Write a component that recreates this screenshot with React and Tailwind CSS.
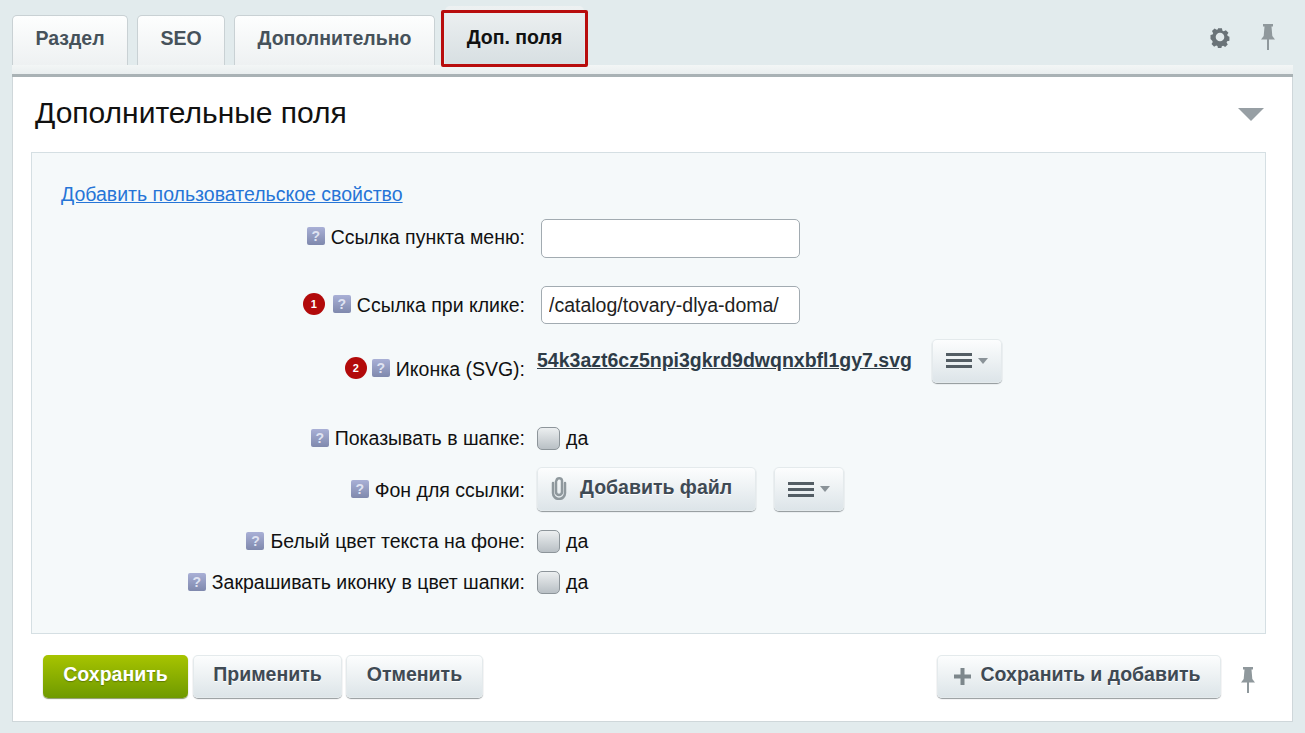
const btn =
  "flex items-center rounded-[5px] bg-linear-to-b from-[#fdfefe] to-[#dce4e8] shadow-[0_1px_1px_rgba(60,70,75,0.55)] inset-ring inset-ring-[#e4eaec] text-[19.5px] font-bold text-[#3f4a54] [text-shadow:0_1px_0_#fff]";

const rowBase = "grid grid-cols-[493px_1fr] items-center gap-x-3";

const Help = () => (
  <span className="mr-[6px] inline-flex h-[18px] w-[18px] shrink-0 -translate-y-[1px] items-center justify-center rounded-[2px] bg-linear-to-b from-[#a9b0d6] to-[#7f89ad] text-[14px] font-bold leading-none text-[#dfe3f2]">
    ?
  </span>
);

const Badge = ({ n, className = "mr-2" }) => (
  <span className={`inline-flex h-[22px] w-[22px] shrink-0 -translate-y-[1px] items-center justify-center rounded-full bg-[#b20a0a] text-[11px] font-bold leading-none text-white ${className}`}>
    {n}
  </span>
);

const Label = ({ children, badge, badgeClass, className = "" }) => (
  <div className={`flex items-center justify-end text-[19.5px] leading-[23px] text-[#111] ${className}`}>
    {badge && <Badge n={badge} className={badgeClass} />}
    <Help />
    <span>{children}</span>
  </div>
);

const Check = () => (
  <span className="flex items-center gap-[6px] text-[19.5px] leading-[23px] text-[#111]">
    <span className="h-[23px] w-[23px] rounded-[5px] border border-[#8d959a] bg-linear-to-b from-[#eceff0] to-[#b9c0c5]" />
    да
  </span>
);

const Pin = ({ className }) => (
  <svg className={className} width="16" height="26" viewBox="0 0 16 26" fill="currentColor">
    <path d="M3 0h10v2.500h-1.500l.8 9.500L15 15.500H1L3.700 12l.8-9.500H3z" />
    <rect x="7" y="15" width="2" height="11" />
  </svg>
);

const Gear = () => (
  <svg width="22" height="22" viewBox="0 0 22 22" fill="#6a7378">
    <path
      fillRule="evenodd"
      d="M8.700 1h4.600l.6 2.800 1.500.7 2.500-1.400 3 3-1.500 2.400.6 1.500 2 .7v4.600l-2.700.6-.6 1.500 1.400 2.400-3 3-2.400-1.500-1.500.6-.6 2.100H8.700l-.6-2.500-1.500-.6-2.400 1.400-3-3 1.400-2.400-.6-1.500L0 13.300V8.700l2.400-.6.7-1.500-1.400-2.500 3-3 2.500 1.500 1.500-.6z"
      transform="translate(1.500 1.500) scale(0.86)"
    />
    <circle cx="11" cy="11" r="4.300" fill="#e2eaec" />
  </svg>
);

const MenuBtn = () => (
  <button className={`${btn} h-[44px] w-[70px] justify-center gap-[6px]`}>
    <span className="flex w-[26px] flex-col gap-[3px]">
      <span className="h-[3px] bg-[#535d64]" />
      <span className="h-[3px] bg-[#535d64]" />
      <span className="h-[3px] bg-[#535d64]" />
    </span>
    <span className="h-0 w-0 border-x-[5px] border-t-[6px] border-x-transparent border-t-[#8a9298]" />
  </button>
);

const Clip = () => (
  <svg width="16" height="24" viewBox="0 0 16 24" fill="none" stroke="#8f989d" strokeWidth="2.500" strokeLinecap="round">
    <path d="M5 5.500V16a3 3 0 0 0 6 0V4.500a2.800 2.800 0 0 0-5.500 0" />
    <path d="M2 7v10a6 6 0 0 0 12 0V7" />
  </svg>
);

const tabs = [
  { name: "Раздел", w: "w-[116px]" },
  { name: "SEO", w: "w-[88px]" },
  { name: "Дополнительно", w: "w-[201px]" },
];

export default function App() {
  return (
    <div className="h-[733px] overflow-hidden bg-[#e2ebed] px-3 font-['Liberation_Sans',Arial,sans-serif]">
      <div className="flex h-[65px] items-end">
        <div className="flex gap-[9px]">
          {tabs.map((t) => (
            <div
              key={t.name}
              className={`${t.w} flex h-[50px] items-center justify-center rounded-t-[5px] border border-b-0 border-[#c9d1d4] bg-linear-to-b from-[#fdfefe] to-[#eef1f2] pb-[3px] text-[19.5px] font-bold text-[#46525b]`}
            >
              {t.name}
            </div>
          ))}
        </div>
        <div className="relative ml-[10px] flex h-[59px] w-[139px] items-center justify-center rounded-t-[5px] bg-linear-to-b from-[#eef1f2] to-[#d7dfe2] pt-[5px] text-[19.5px] font-bold text-[#111]">
          Доп. поля
          <span className="absolute -inset-x-[4px] bottom-[-2px] top-[4px] rounded-[2px] border-[3px] border-[#b80d0d]" />
        </div>
        <div className="ml-auto mr-[17px] flex items-center gap-[29px] pb-[15px]">
          <Gear />
          <Pin className="text-[#8f989c]" />
        </div>
      </div>

      <div className="h-[12px] border-b-[3px] border-[#a9b2b5] bg-linear-to-b from-[#f3f6f6] to-[#e9eeef]" />

      <div className="flex h-[645px] flex-col border-x border-b border-[#cfd7da] bg-white pl-[18px] pr-[26px]">
        <div className="flex h-[75px] items-center justify-between pr-[2px]">
          <h1 className="-mt-[4px] ml-[4px] text-[30px] font-normal text-[#111]">Дополнительные поля</h1>
          <span className="h-0 w-0 border-x-[13px] border-t-[13px] border-x-transparent border-t-[#979fa4]" />
        </div>

        <div className="flex h-[482px] flex-col border border-[#d5dfe3] bg-[#f5f9fa] pt-[30px]">
          <a className="ml-[29px] h-[23px] text-[19.5px] leading-[23px] text-[#2675d7] underline">Добавить пользовательское свойство</a>

          <div className={`${rowBase} mt-[13px] h-[39px]`}>
            <Label className="-mt-[3px]">Ссылка пункта меню:</Label>
            <input className="ml-1 h-[39px] w-[259px] rounded-[5px] border border-[#a2abb1] bg-white px-2 text-[19.5px]" />
          </div>

          <div className={`${rowBase} mt-[28px] h-[38px]`}>
            <Label badge="1">Ссылка при клике:</Label>
            <input
              readOnly
              value="/catalog/tovary-dlya-doma/"
              className="ml-1 h-[38px] w-[259px] rounded-[5px] border border-[#a2abb1] bg-white px-[7px] text-[19.5px] text-[#222]"
            />
          </div>

          <div className={`${rowBase} mt-[14px] h-[45px]`}>
            <Label badge="2" badgeClass="mr-[5px]" className="mt-[17px]">Иконка (SVG):</Label>
            <div className="flex items-center gap-5">
              <a className="text-[19.5px] font-bold text-[#2e3c47] underline">54k3azt6cz5npi3gkrd9dwqnxbfl1gy7.svg</a>
              <MenuBtn />
            </div>
          </div>

          <div className={`${rowBase} mt-[44px] h-[23px]`}>
            <Label>Показывать в шапке:</Label>
            <Check />
          </div>

          <div className={`${rowBase} mt-[17px] h-[44px]`}>
            <Label className="mt-[2px]">Фон для ссылки:</Label>
            <div className="flex gap-[18px]">
              <button className={`${btn} h-[44px] w-[219px] gap-[13px] pb-[3px] pl-[14px]`}>
                <Clip />
                Добавить файл
              </button>
              <MenuBtn />
            </div>
          </div>

          <div className={`${rowBase} mt-[19px] h-[23px]`}>
            <Label>Белый цвет текста на фоне:</Label>
            <Check />
          </div>

          <div className={`${rowBase} mt-[18px] h-[23px]`}>
            <Label>Закрашивать иконку в цвет шапки:</Label>
            <Check />
          </div>
        </div>

        <div className="flex items-start pl-3 pr-[10px] pt-[21px]">
          <button className="h-[43px] w-[145px] rounded-[5px] bg-linear-to-b from-[#a7c400] to-[#6f9a00] pb-[4px] text-[19.5px] font-bold text-white shadow-[0_1px_1px_rgba(60,80,0,0.6)] [text-shadow:0_1px_1px_rgba(60,80,0,0.5)]">
            Сохранить
          </button>
          <button className={`${btn} ml-[5px] h-[43px] w-[149px] justify-center pb-[4px]`}>Применить</button>
          <button className={`${btn} ml-[4px] h-[43px] w-[137px] justify-center pb-[4px]`}>Отменить</button>
          <button className={`${btn} ml-auto h-[43px] w-[284px] justify-center gap-[10px] pb-[4px] pr-[4px]`}>
            <svg width="17" height="17" viewBox="0 0 17 17" fill="#7d878c" className="mt-[4px]">
              <path d="M6.500 0h4v6.500H17v4h-6.500V17h-4v-6.500H0v-4h6.500z" />
            </svg>
            Сохранить и добавить
          </button>
          <Pin className="ml-[19px] mt-[12px] text-[#8f989c]" />
        </div>
      </div>
    </div>
  );
}
